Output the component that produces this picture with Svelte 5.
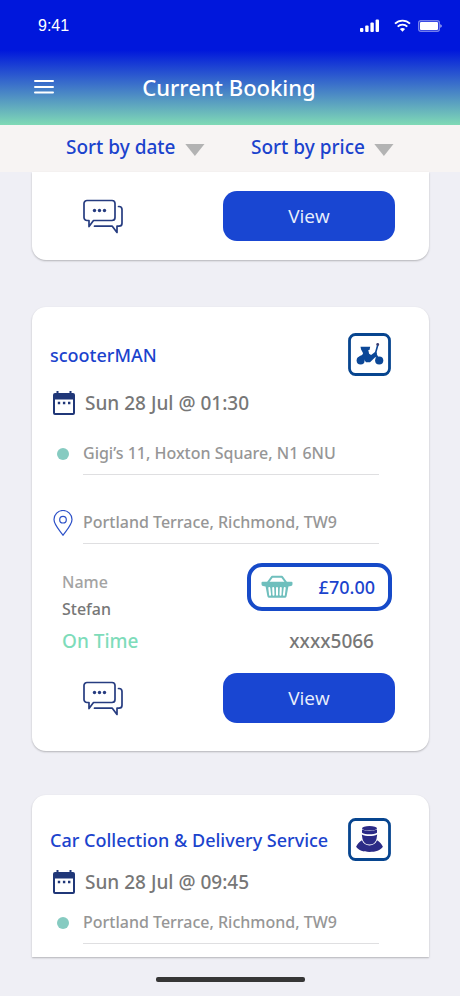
<script lang="ts">
	type Booking = {
		id: number;
		title?: string;
		service?: 'scooter' | 'chauffeur';
		date?: string;
		stops: string[];
		customer?: { name: string; status: string; price: string; ref: string };
		actions: boolean;
		cut?: 'top' | 'bottom';
	};

	const bookings: Booking[] = [
		{ id: 1, stops: [], actions: true, cut: 'top' },
		{
			id: 2,
			title: 'scooterMAN',
			service: 'scooter',
			date: 'Sun 28 Jul @ 01:30',
			stops: ['Gigi’s 11, Hoxton Square, N1 6NU', 'Portland Terrace, Richmond, TW9'],
			customer: { name: 'Stefan', status: 'On Time', price: '£70.00', ref: 'xxxx5066' },
			actions: true
		},
		{
			id: 3,
			title: 'Car Collection & Delivery Service',
			service: 'chauffeur',
			date: 'Sun 28 Jul @ 09:45',
			stops: ['Portland Terrace, Richmond, TW9'],
			actions: false,
			cut: 'bottom'
		}
	];

	const sorts = [
		{ id: 'date', label: 'Sort by date', options: ['Newest', 'Oldest'] },
		{ id: 'price', label: 'Sort by price', options: ['Lowest', 'Highest'] }
	];
</script>

<div class="screen">
	<header class="header">
		<div class="status-bar">
			<span class="time">9:41</span>
			<div class="status-icons">
				<svg width="20" height="14" viewBox="0 0 20 14" fill="#fff">
					<rect x="0" y="9" width="3.4" height="4" rx="1" />
					<rect x="5.2" y="6.5" width="3.4" height="6.5" rx="1" />
					<rect x="10.4" y="3.6" width="3.4" height="9.4" rx="1" />
					<rect x="15.6" y="0.6" width="3.4" height="12.4" rx="1" />
				</svg>
				<svg width="17" height="14" viewBox="0 0 17 14" fill="none" stroke="#fff" stroke-width="1.9">
					<path d="M1 4.7a10.6 10.6 0 0 1 15 0" />
					<path d="M3.7 7.6a6.8 6.8 0 0 1 9.6 0" />
					<path d="M8.5 12.8 5.9 10.1a3.8 3.8 0 0 1 5.2 0z" fill="#fff" stroke="none" />
				</svg>
				<svg width="24" height="14" viewBox="0 0 24 14">
					<rect x="0.7" y="1.7" width="20.6" height="10.6" rx="2" fill="none" stroke="#fff" stroke-opacity="0.45" stroke-width="1.4" />
					<rect x="2" y="3" width="18" height="8" rx="1" fill="#fff" />
					<path d="M22.3 5.2c1 .4 1.4 1 1.4 1.8s-.4 1.4-1.4 1.8z" fill="#fff" fill-opacity="0.7" />
				</svg>
			</div>
		</div>
		<div class="nav">
			<button class="menu-button" aria-label="Menu">
				<svg width="20" height="16" viewBox="0 0 20 16" stroke="#fff" stroke-width="2" stroke-linecap="round">
					<path d="M1 2h18M1 8h18M1 13.5h18" />
				</svg>
			</button>
			<h1>Current Booking</h1>
		</div>
	</header>

	<div class="sort-bar">
		{#each sorts as sort (sort.id)}
			<div class="sort">
				<select id="sort-{sort.id}" aria-label={sort.label}>
					<option>{sort.label}</option>
					{#each sort.options as option}
						<option>{option}</option>
					{/each}
				</select>
				<svg class="sort-arrow" width="20" height="12" viewBox="0 0 20 12">
					<path d="M.3 0h19.2L9.900 12z" fill="#b3b3b3" />
				</svg>
			</div>
		{/each}
	</div>

	<main class="list">
		{#each bookings as booking (booking.id)}
			<article class="card {booking.cut ? `cut-${booking.cut}` : ''}">
				{#if booking.title}
					<div class="card-head">
						<h2>{booking.title}</h2>
						<svg width="43" height="43" viewBox="0 0 43 43">
							<rect x="1.5" y="1.5" width="40" height="40" rx="6" fill="#fff" stroke="#07458f" stroke-width="2.8" />
							{#if booking.service === 'scooter'}
								<g fill="#0b4797">
									<circle cx="12.6" cy="27.5" r="4" />
									<circle cx="31.2" cy="27.5" r="4.1" />
									<path d="M12.5 13.7h9.7l-.7 3.300h-1.200l.8 3.800 2 1.300 4.300-3.300 1.700 1.300-1.100 2.300 1.500 2.600-2.300-.8-5.200 5.100h-4l-2.300-3.300-6.600 1.200c.4-2.600 2.400-4.400 5-5.200l1-1.800-2-3.600z" />
								</g>
								<path d="M27 22l2.700-9.800M28 21.500l3.200 6" fill="none" stroke="#0b4797" stroke-width="1.6" stroke-linecap="round" />
								<circle cx="29.700" cy="11.500" r="1.400" fill="#3b3c70" />
							{:else}
								<g fill="#2b2b86">
									<path d="M14 11.500v3.200c3.600 2.200 11.400 2.200 15 0v-3.200c-3.600 1.900-11.400 1.900-15 0z" />
									<ellipse cx="21.500" cy="10.300" rx="7.500" ry="2.300" />
									<path d="M13.800 16.400c4.400 2 11 2 15.400 0l-.7 4.600a7.200 7.200 0 0 1-14 0z" />
									<path d="M14 22.300c1.200 3.300 3.900 5.200 7.500 5.200s6.300-1.900 7.500-5.200c2.600 1.300 4.600 3.700 5.900 6.500-2.400 3.500-7.200 5.200-13.400 5.200s-11-1.700-13.400-5.200c1.300-2.800 3.300-5.200 5.900-6.500z" />
								</g>
							{/if}
						</svg>
					</div>
				{/if}

				{#if booking.date}
					<div class="date">
						<svg width="24" height="26" viewBox="0 0 24 26">
							<path d="M4.500 1h2v2h11V1h2v2H21a2 2 0 0 1 2 2v18a2 2 0 0 1-2 2H3a2 2 0 0 1-2-2V5a2 2 0 0 1 2-2h1.500zM3 9.500V23h18V9.500z" fill="#203778" fill-rule="evenodd" />
							<path d="M5.800 11.800h2.400v2.400H5.800zM10.900 11.800h2.400v2.400h-2.400zM16 11.800h2.400v2.400H16z" fill="#203778" />
						</svg>
						<span>{booking.date}</span>
					</div>
				{/if}

				{#if booking.stops.length}
					<ul class="stops">
						{#each booking.stops as stop, i}
							<li class="stop">
								<span class="stop-marker">
									{#if i === 0}
										<span class="dot"></span>
									{:else}
										<svg width="20" height="26" viewBox="0 0 20 26" fill="none" stroke="#2c50c8" stroke-width="1.2">
											<path d="M10 25.300C7.500 21.300 1 15 1 9.500a9 9 0 0 1 18 0c0 5.500-6.500 11.800-9 15.800z" />
											<circle cx="10" cy="9.700" r="3.300" />
										</svg>
									{/if}
								</span>
								<span class="stop-text">{stop}</span>
							</li>
						{/each}
					</ul>
				{/if}

				{#if booking.customer}
					<div class="details">
						<div class="customer">
							<span class="label">Name</span>
							<span class="name">{booking.customer.name}</span>
							<span class="status">{booking.customer.status}</span>
						</div>
						<div class="payment">
							<div class="price">
								<svg width="32" height="24" viewBox="0 0 32 24">
									<path d="M6.500 8L11 1.800h10L25.500 8" fill="none" stroke="#6fbfbd" stroke-width="2" stroke-linejoin="round" />
									<path d="M1.500 6.800h29a1 1 0 0 1 1 1v1.400a2 2 0 0 1-1.500 1.800l-2.600.6-1.800 9.600a2 2 0 0 1-2 1.600H8.400a2 2 0 0 1-2-1.600l-1.800-9.600-2.600-.6A2 2 0 0 1 .5 9.200V7.800a1 1 0 0 1 1-1z" fill="#6fbfbd" />
									<path d="M8.300 13l.8 6.800M12.200 13l.3 6.800M16 13v6.800M19.800 13l-.3 6.800M23.700 13l-.8 6.800" stroke="#fff" stroke-width="2" stroke-linecap="round" />
								</svg>
								<span>{booking.customer.price}</span>
							</div>
							<span class="ref">{booking.customer.ref}</span>
						</div>
					</div>
				{/if}

				{#if booking.actions}
					<div class="actions">
						<button class="chat-button" aria-label="Messages">
							<svg width="40" height="36" viewBox="0 0 40 36" fill="none" stroke="#263c80" stroke-width="1.7" stroke-linejoin="round" stroke-linecap="round">
								<path d="M4 2.500h25a3 3 0 0 1 3 3v14a3 3 0 0 1-3 3H10.500L6 28.500v-6H4a3 3 0 0 1-3-3v-14a3 3 0 0 1 3-3z" />
								<path d="M35.500 8.500h.5a3 3 0 0 1 3 3v13.700a3 3 0 0 1-3 3h-2v6.300l-4.700-6.300H11.500" />
								<g fill="#263c80" stroke="none">
									<circle cx="11.500" cy="12.500" r="1.700" />
									<circle cx="16.500" cy="12.500" r="1.700" />
									<circle cx="21.500" cy="12.500" r="1.700" />
								</g>
							</svg>
						</button>
						<button class="view-button">View</button>
					</div>
				{/if}
			</article>
		{/each}
	</main>

	<div class="home-indicator"></div>
</div>

<style>
	:global(body) {
		background: #efeff5;
	}

	.screen {
		font-family: 'Noto Sans', 'Open Sans', sans-serif;
		font-weight: 500;
		color: #777;
	}

	svg {
		display: block;
		flex: none;
	}

	h1,
	h2,
	ul {
		margin: 0;
		padding: 0;
		font-weight: 500;
		list-style: none;
	}

	button {
		padding: 0;
		border: none;
		background: none;
		font-family: inherit;
		cursor: pointer;
	}

	.header {
		background: linear-gradient(#0017dc 0, #0017dc 50px, #80dab5 100%);
		color: #fff;
	}

	.status-bar {
		display: flex;
		justify-content: space-between;
		align-items: center;
		height: 51px;
		padding: 0 18px 0 38px;
	}

	.time {
		font-family: 'Liberation Sans', Arial, sans-serif;
		font-size: 16px;
		font-weight: 400;
	}

	.status-icons {
		display: flex;
		gap: 14px;
	}

	.status-icons svg:last-child {
		margin-left: -7px;
	}

	.nav {
		display: grid;
		grid-template-columns: 20px 1fr 20px;
		align-items: center;
		height: 72px;
		padding: 0 36px 2px 34px;
	}

	h1 {
		font-size: 22px;
		line-height: 32px;
		text-align: center;
	}

	.sort-bar {
		display: flex;
		justify-content: center;
		gap: 46px;
		height: 47px;
		background: #f7f4f3;
	}

	.sort {
		position: relative;
		display: flex;
		align-items: center;
	}

	select {
		appearance: none;
		width: 139px;
		height: 47px;
		padding: 0 0 4px;
		border: none;
		background: none;
		color: #1b43cd;
		font-family: inherit;
		font-size: 19px;
		font-weight: 500;
	}

	.sort + .sort select {
		width: 143px;
	}

	.sort-arrow {
		position: absolute;
		right: 0;
		top: 19px;
		pointer-events: none;
	}

	.list {
		display: flex;
		flex-direction: column;
		gap: 44px;
		padding: 0 31px 0 32px;
	}

	.card {
		padding: 26px 34px 28px 18px;
		border-radius: 14px;
		background: #fff;
		box-shadow: 0 1px 2px rgba(0, 0, 0, 0.25);
	}

	.cut-top {
		margin-bottom: 3px;
		padding-top: 19px;
		padding-bottom: 19px;
		border-radius: 0 0 14px 14px;
	}

	.cut-bottom {
		padding-top: 23px;
		padding-bottom: 13px;
		border-radius: 14px 14px 0 0;
	}

	.card-head {
		display: flex;
		justify-content: space-between;
		align-items: center;
		padding-right: 4px;
	}

	h2 {
		color: #1b43cd;
		font-size: 18px;
		line-height: 24px;
		white-space: nowrap;
	}

	.date {
		display: flex;
		align-items: center;
		gap: 9px;
		margin: 14px 0 16px 2px;
		font-size: 19px;
		line-height: 26px;
	}

	.cut-bottom .date {
		margin-top: 8px;
		margin-bottom: 6px;
	}

	.stops {
		display: flex;
		flex-direction: column;
		gap: 26px;
		padding: 0 16px 0 2px;
	}

	.stop {
		display: flex;
		align-items: center;
		gap: 9px;
	}

	.stop-marker {
		display: flex;
		justify-content: center;
		width: 22px;
	}

	.dot {
		width: 12px;
		height: 12px;
		border-radius: 50%;
		background: #86cbc1;
	}

	.stop-text {
		flex: 1;
		border-bottom: 1px solid #dfdfe1;
		color: #969696;
		font-size: 16px;
		line-height: 42px;
		white-space: nowrap;
	}

	.details {
		display: flex;
		justify-content: space-between;
		padding: 19px 3px 0 12px;
	}

	.customer {
		display: flex;
		flex-direction: column;
		padding-top: 6px;
		font-size: 16px;
		line-height: 27px;
	}

	.label {
		color: #a3a3a3;
	}

	.status {
		color: #7edcba;
		font-size: 19px;
		line-height: 36px;
	}

	.payment {
		display: flex;
		flex-direction: column;
		gap: 12px;
	}

	.price {
		display: flex;
		justify-content: space-between;
		align-items: center;
		box-sizing: border-box;
		width: 145px;
		height: 48px;
		padding: 0 13px 0 10px;
		border: 4px solid #164ac8;
		border-radius: 15px;
		color: #1b43cd;
		font-size: 18px;
	}

	.ref {
		padding-right: 18px;
		font-size: 19px;
		line-height: 36px;
		text-align: right;
	}

	.actions {
		display: flex;
		justify-content: space-between;
		align-items: center;
		padding-left: 33px;
	}

	.details + .actions {
		margin-top: 14px;
	}

	.view-button {
		width: 172px;
		height: 50px;
		border-radius: 14px;
		background: #1946d2;
		color: #e9effc;
		font-family: 'Open Sans', 'Noto Sans', sans-serif;
		font-size: 19px;
		font-weight: 400;
	}

	.home-indicator {
		width: 149px;
		height: 5px;
		margin: 20px auto 13px;
		border-radius: 2px;
		background: #363636;
	}
</style>
